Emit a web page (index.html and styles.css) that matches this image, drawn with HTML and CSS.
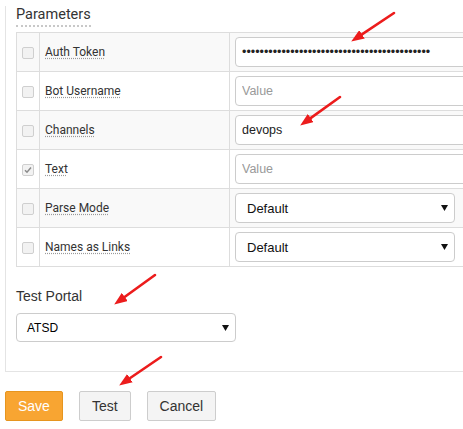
FILE: index.html
```html
<!DOCTYPE html>
<html>
<head>
<meta charset="utf-8">
<link rel="stylesheet" href="styles.css">
</head>
<body>
<div class="panel">
  <h3 class="section-title"><span class="tip">Parameters</span></h3>
  <table class="params">
    <colgroup><col class="c-chk"><col class="c-name"><col class="c-val"></colgroup>
    <tr class="odd">
      <td class="chk"><span class="cb"></span></td>
      <td class="name"><span class="tip">Auth Token</span></td>
      <td class="val"><input class="field" type="password" value="abcdefghijabcdefghijabcdefghijabcdefghijabc"></td>
    </tr>
    <tr>
      <td class="chk"><span class="cb"></span></td>
      <td class="name"><span class="tip">Bot Username</span></td>
      <td class="val"><input class="field" type="text" placeholder="Value"></td>
    </tr>
    <tr class="odd">
      <td class="chk"><span class="cb"></span></td>
      <td class="name"><span class="tip">Channels</span></td>
      <td class="val"><input class="field" type="text" value="devops"></td>
    </tr>
    <tr>
      <td class="chk"><span class="cb checked"><svg width="10" height="10" viewBox="0 0 10 10"><path d="M2 5.2 L4 7.2 L8 2.6" fill="none" stroke="#8a8a8a" stroke-width="1.5"/></svg></span></td>
      <td class="name"><span class="tip">Text</span></td>
      <td class="val"><input class="field" type="text" placeholder="Value"></td>
    </tr>
    <tr class="odd">
      <td class="chk"><span class="cb"></span></td>
      <td class="name"><span class="tip">Parse Mode</span></td>
      <td class="val"><div class="select"><span>Default</span><svg class="caret" width="7" height="6" viewBox="0 0 7 6"><path d="M0 0 H7 L3.5 6 Z" fill="#111"/></svg></div></td>
    </tr>
    <tr>
      <td class="chk"><span class="cb"></span></td>
      <td class="name"><span class="tip">Names as Links</span></td>
      <td class="val"><div class="select"><span>Default</span><svg class="caret" width="7" height="6" viewBox="0 0 7 6"><path d="M0 0 H7 L3.5 6 Z" fill="#111"/></svg></div></td>
    </tr>
  </table>
  <div class="portal-label">Test Portal</div>
  <div class="select portal"><span>ATSD</span><svg class="caret" width="7" height="6" viewBox="0 0 7 6"><path d="M0 0 H7 L3.5 6 Z" fill="#111"/></svg></div>
</div>
<div class="actions">
  <button class="btn btn-save">Save</button>
  <button class="btn">Test</button>
  <button class="btn">Cancel</button>
</div>
<svg class="annot" width="463" height="429" viewBox="0 0 463 429">
  <defs>
    <marker id="ah" markerUnits="userSpaceOnUse" markerWidth="13" markerHeight="10" refX="1" refY="5" orient="auto">
      <path d="M0,0 L13,5 L0,10 Z" fill="#ec1c1c"/>
    </marker>
  </defs>
  <line x1="394" y1="13" x2="361.2" y2="34.9" stroke="#ec1c1c" stroke-width="2.6" stroke-linecap="round" marker-end="url(#ah)"/>
  <line x1="340" y1="97" x2="309.9" y2="118.6" stroke="#ec1c1c" stroke-width="2.6" stroke-linecap="round" marker-end="url(#ah)"/>
  <line x1="155" y1="275" x2="123.9" y2="297.5" stroke="#ec1c1c" stroke-width="2.6" stroke-linecap="round" marker-end="url(#ah)"/>
  <line x1="161" y1="357" x2="129.1" y2="378.8" stroke="#ec1c1c" stroke-width="2.6" stroke-linecap="round" marker-end="url(#ah)"/>
</svg>
</body>
</html>
```
FILE: styles.css
```css
html, body {
  margin: 0;
  padding: 0;
  background: #fff;
  overflow: hidden;
}
body {
  width: 463px;
  height: 429px;
  position: relative;
  font-family: "Liberation Sans", Arial, sans-serif;
  color: #333;
}
.panel {
  margin-left: 5px;
  width: 520px;
  border-left: 1px solid #e4e4e4;
  border-bottom: 1px solid #e4e4e4;
  padding: 0 10px 29px 10px;
}
.section-title {
  margin: 6px 0 5px;
  font: 400 14.5px/17px Roboto, sans-serif;
  color: #333;
}
.section-title .tip {
  display: inline-block;
  padding-bottom: 2px;
  border-bottom: 2px dotted #c8c8c8;
}
.params {
  border-collapse: collapse;
  table-layout: fixed;
  width: 100%;
  font: 400 12px Roboto, sans-serif;
  color: #333;
}
.c-chk { width: 23px; }
.c-name { width: 190px; }
.params td {
  border: 1px solid #ddd;
  padding: 4px 5px;
  vertical-align: middle;
  background: #fff;
}
.params tr.odd td {
  background: #f9f9f9;
}
.params td.chk {
  padding: 0 5px;
}
.cb {
  display: block;
  box-sizing: border-box;
  width: 12px;
  height: 12px;
  margin-top: 2px;
  border: 1px solid #cfcfcf;
  border-radius: 2px;
  background: #f2f2f2;
}
.cb svg {
  display: block;
  margin: 0;
}
.name .tip {
  text-decoration: underline dotted #9a9a9a;
  text-underline-offset: 2px;
}
.field {
  display: block;
  box-sizing: border-box;
  width: 100%;
  height: 30px;
  margin: 0;
  padding: 0 6px;
  border: 1px solid #ccc;
  border-radius: 4px;
  background: #fff;
  font: 12.5px "Liberation Sans", Arial, sans-serif;
  color: #222;
  outline: none;
}
.field::placeholder {
  color: #999;
}
.select {
  display: flex;
  align-items: center;
  justify-content: space-between;
  box-sizing: border-box;
  width: 220px;
  height: 30px;
  padding: 0 6px 0 11px;
  border: 1px solid #ccc;
  border-radius: 4px;
  background: #fff;
  font: 13px "Liberation Sans", Arial, sans-serif;
  color: #111;
}
.caret {
  display: block;
}
.portal-label {
  margin-top: 19px;
  font: 14px/20px "Liberation Sans", Arial, sans-serif;
  color: #333;
}
.select.portal {
  margin-top: 7px;
  height: 29px;
  padding-left: 10px;
  font-size: 12px;
  color: #000;
}
.actions {
  display: flex;
  gap: 16px;
  margin: 19px 0 0 5px;
}
.btn {
  height: 30px;
  padding: 0 12px;
  margin: 0;
  font: 14px "Liberation Sans", Arial, sans-serif;
  color: #333;
  background: #f4f4f4;
  border: 1px solid #cdcdcd;
  border-radius: 2px;
}
.btn-save {
  background: #f8a532;
  border-color: #e6951f;
  color: #fff;
}
.annot {
  position: absolute;
  left: 0;
  top: 0;
  pointer-events: none;
}
```
